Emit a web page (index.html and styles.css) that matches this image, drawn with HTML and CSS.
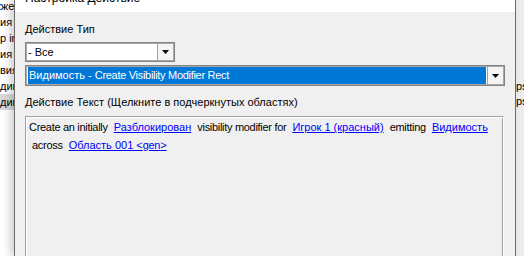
FILE: index.html
```html
<!DOCTYPE html>
<html lang="ru">
<head>
    <meta charset="UTF-8">
    <title>Настройка Действие</title>
    <link rel="stylesheet" href="styles.css">
</head>
<body>
<div class="screen">

    <!-- окно за диалогом, слева -->
    <div class="bg-left">
        <div class="bg-list">
            <div class="bg-row">кжения</div>
            <div class="bg-row">ия</div>
            <div class="bg-row">p in</div>
            <div class="bg-row">ия</div>
            <div class="bg-row">вия</div>
            <div class="bg-row">дим</div>
            <div class="bg-row bg-row-active">дим</div>
        </div>
    </div>

    <!-- диалог -->
    <div class="dialog">
        <div class="titlebar"><span class="title">Настройка Действие</span></div>
        <div class="dialog-body">
            <div class="label">Действие Тип</div>

            <div class="combo combo-type">
                <div class="combo-value">- Все</div>
                <div class="combo-btn">
                    <svg width="7" height="4" viewBox="0 0 7 4"><polygon points="0,0 7,0 3.5,4" fill="#000"/></svg>
                </div>
            </div>

            <div class="combo combo-action">
                <div class="combo-value"><span class="selected">Видимость - <span class="lat">Create Visibility Modifier Rect</span></span></div>
                <div class="combo-btn">
                    <svg width="7" height="4" viewBox="0 0 7 4"><polygon points="0,0 7,0 3.5,4" fill="#000"/></svg>
                </div>
            </div>

            <div class="label label-text">Действие Текст (Щелкните в подчеркнутых областях)</div>

            <div class="action-text">
                <div class="line"><span class="lat">Create an initially</span> <a class="param">Разблокирован</a> <span class="lat">visibility modifier for</span> <a class="param">Игрок 1 (красный)</a> <span class="lat">emitting</span> <a class="param">Видимость</a></div>
                <div class="line line-next"><span class="lat">across</span> <a class="param">Область 001 &lt;<span class="lat">gen</span>&gt;</a></div>
            </div>
        </div>
    </div>

    <!-- окно за диалогом, справа -->
    <div class="bg-right">
        <div class="bg-row">ps</div>
        <div class="bg-row">ps</div>
    </div>

</div>
</body>
</html>
```

FILE: styles.css
```css
body {
    margin: 0;
    font-family: "Liberation Sans", Arial, sans-serif;
    font-size: 11px;
    color: #000;
}
.screen {
    display: flex;
    width: 524px;
    height: 256px;
    overflow: hidden;
    background: #fff;
}
/* латиница у Segoe UI уже, чем у Arial */
.lat {
    letter-spacing: -0.3px;
}

/* фоновые окна */
.bg-left {
    width: 14px;
    flex: none;
    overflow: hidden;
    background: #fff;
}
.bg-list {
    margin-top: -2px;
}
.bg-row {
    height: 16px;
    line-height: 16px;
    white-space: nowrap;
}
.bg-left .bg-row:first-child {
    text-indent: -4px;
}
.bg-row-active {
    background: #d9d9d9;
}
.bg-right {
    flex: 1;
    overflow: hidden;
    background: #ececec;
    padding-top: 79px;
}
.bg-right .bg-row {
    height: 15px;
    line-height: 15px;
}

/* диалог */
.dialog {
    flex: none;
    width: 500px;
    position: relative;
    background: #f0f0f0;
    border-left: 1px solid #6b6b6b;
    border-right: 1px solid #6b6b6b;
    box-shadow: -4px 0 8px rgba(0, 0, 0, 0.18);
}
.titlebar {
    height: 12px;
    overflow: hidden;
    background: #fff;
    padding-left: 10px;
}
.title {
    display: block;
    font-size: 12px;
    line-height: 12px;
    margin-top: -8px;
}
.dialog-body {
    padding: 10px 10px 0;
}
.label {
    line-height: 14px;
    white-space: nowrap;
}
.label-text {
    margin-top: 9px;
}

/* выпадающие списки */
.combo {
    display: flex;
    box-sizing: border-box;
    height: 20px;
    margin-top: 6px;
    background: #fff;
    border: 1px solid #838383;
    box-shadow: inset 0 0 0 1px #a8a8a8;
}
.combo-type {
    width: 150px;
}
.combo-action {
    width: 480px;
    height: 21px;
    margin-top: 3px;
}
.combo-value {
    flex: 1;
    display: flex;
    align-items: stretch;
    padding: 1px 0 1px 2px;
    line-height: 16px;
    white-space: nowrap;
}
.combo-type .combo-value {
    align-items: center;
}
.selected {
    flex: 1;
    background: #0078d7;
    color: #fff;
    padding-left: 1px;
}
.combo-btn {
    width: 15px;
    margin: 1px;
    flex: none;
    display: flex;
    align-items: center;
    justify-content: center;
    background: #f4f4f4;
    border-left: 1px solid #a0a0a0;
}

/* текст действия */
.action-text {
    box-sizing: border-box;
    width: 479px;
    height: 150px;
    margin-top: 7px;
    padding: 1px 3px;
    border-top: 1px solid #a0a0a0;
    border-left: 1px solid #a0a0a0;
    border-right: 1px solid #fff;
    border-bottom: 1px solid #fff;
    box-shadow: inset 1px 1px #fff, inset -1px -1px #a0a0a0;
}
.line {
    line-height: 18px;
    white-space: nowrap;
}
.line-next {
    padding-left: 3px;
}
.param {
    color: #0000ff;
    text-decoration: underline;
    margin: 0 3px;
    cursor: pointer;
}
```
